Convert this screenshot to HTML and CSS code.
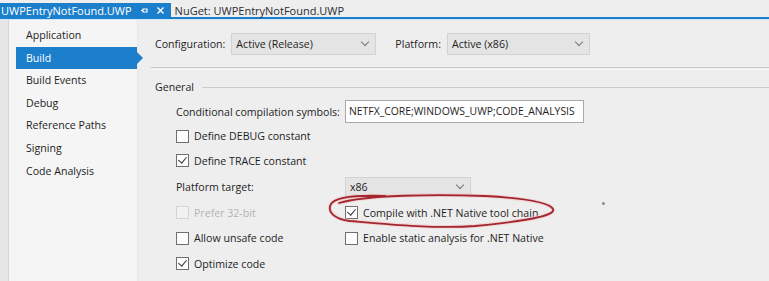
FILE: index.html
```html
<!DOCTYPE html>
<html>
<head>
    <title>UWPEntryNotFound.UWP</title>
    <link rel="stylesheet" href="styles.css">
</head>
<body>
    <div class="tabbar">
        <div class="tab active">
            <span>UWPEntryNotFound.UWP</span>
            <svg class="pin" width="9" height="9" viewBox="0 0 9 9"><path d="M1 4.5h2M3 2.5v4M3 3h4v3H3" fill="none" stroke="#fff" stroke-width="1.2"/></svg>
            <svg class="close" width="9" height="9" viewBox="0 0 9 9"><path d="M1.5 1.5l6 6M7.5 1.5l-6 6" stroke="#fff" stroke-width="1.4"/></svg>
        </div>
        <div class="tab">NuGet: UWPEntryNotFound.UWP</div>
    </div>

    <div class="content">
        <div class="gutter"></div>
        <ul class="sidebar">
            <li>Application</li>
            <li class="selected">Build</li>
            <li>Build Events</li>
            <li>Debug</li>
            <li>Reference Paths</li>
            <li>Signing</li>
            <li>Code Analysis</li>
        </ul>

        <div class="main">
            <div class="config-row">
                <span class="label config-label">Configuration:</span>
                <div class="select config-select">Active (Release)<span class="chevron"></span></div>
                <span class="label platform-label">Platform:</span>
                <div class="select platform-select">Active (x86)<span class="chevron"></span></div>
            </div>
            <div class="divider"></div>

            <div class="group-title"><span>General</span></div>

            <div class="fields">
                <span class="label">Conditional compilation symbols:</span>
                <div class="textbox">NETFX_CORE;WINDOWS_UWP;CODE_ANALYSIS</div>

                <label class="check"><span class="box"></span>Define DEBUG constant</label>
                <span></span>

                <label class="check"><span class="box checked"></span>Define TRACE constant</label>
                <span></span>

                <span class="label">Platform target:</span>
                <div class="select target-select">x86<span class="chevron"></span></div>

                <label class="check disabled"><span class="box"></span>Prefer 32-bit</label>
                <label class="check"><span class="box checked"></span>Compile with .NET Native tool chain</label>

                <label class="check"><span class="box"></span>Allow unsafe code</label>
                <label class="check"><span class="box"></span>Enable static analysis for .NET Native</label>

                <label class="check"><span class="box checked"></span>Optimize code</label>
                <span></span>
            </div>
        </div>
    </div>

    <!-- hand drawn marker round the native tool chain option -->
    <svg class="scribble" width="240" height="42" viewBox="0 0 240 42">
        <path d="M14 12 C40 4 110 3 160 5 C195 7 224 11 228 18 C231 25 200 30 150 35 C110 38 60 33 25 30 C8 28 2 20 6 13 C10 6 30 4 60 5" fill="none" stroke="#f4c6c8" stroke-width="4" stroke-linecap="round" opacity="0.6"/>
        <path d="M14 12 C40 4 110 3 160 5 C195 7 224 11 228 18 C231 25 200 30 150 35 C110 38 60 33 25 30 C8 28 2 20 6 13 C10 6 30 4 60 5" fill="none" stroke="#a3262e" stroke-width="1.8" stroke-linecap="round"/>
    </svg>
    <span class="speck"></span>
</body>
</html>
```

FILE: styles.css
```css
body {
    margin: 0;
    width: 769px;
    height: 281px;
    overflow: hidden;
    background: #eeeeee;
    font-family: "Open Sans", "Noto Sans", Arial, sans-serif;
    font-size: 10.6px;
    color: #1e1e1e;
    position: relative;
}
.tabbar {
    display: flex;
    align-items: flex-end;
    height: 17px;
    border-bottom: 2px solid #1c7fcc;
    box-shadow: 0 1px 0 #cfe7f6;
    font-size: 11px;
}
.tab {
    display: flex;
    align-items: center;
    height: 14px;
    padding: 0 6px 0 4px;
    white-space: nowrap;
    color: #2d2d30;
}
.tab.active {
    background: #1c7fcc;
    color: #fff;
    padding-right: 6px;
    padding-left: 1px;
}
.pin {
    margin-left: 8px;
}
.close {
    margin-left: 7px;
}
.content {
    display: flex;
    height: 262px;
    margin-top: 1px;
}
.gutter {
    width: 8px;
    background: #e6e6e6;
    border-right: 1px solid #d6d6d6;
}
.sidebar {
    list-style: none;
    margin: 0;
    padding: 4px 0 0 7px;
    width: 121px;
    background: #f5f5f5;
    border-right: 1px solid #e9e9e9;
}
.sidebar li {
    position: relative;
    height: 22px;
    line-height: 22px;
    padding-left: 10px;
    margin-bottom: 0.6px;
}
.sidebar li.selected {
    background: #1c7fcc;
    color: #fff;
}
.sidebar li.selected::after {
    content: "";
    position: absolute;
    right: -6px;
    top: 5px;
    border-left: 6px solid #1c7fcc;
    border-top: 6px solid transparent;
    border-bottom: 6px solid transparent;
}
.main {
    flex: 1;
    padding-left: 17px;
}
.config-row {
    display: flex;
    align-items: center;
    height: 22px;
    margin-top: 13px;
}
.label {
    white-space: nowrap;
}
.select {
    position: relative;
    box-sizing: border-box;
    height: 22px;
    line-height: 20px;
    padding-left: 4px;
    background: #e4e4e4;
    border: 1px solid #d2d2d2;
    white-space: nowrap;
}
.chevron {
    position: absolute;
    right: 7px;
    top: 5px;
    width: 5px;
    height: 5px;
    border-right: 1px solid #777;
    border-bottom: 1px solid #777;
    transform: rotate(45deg);
}
.config-select {
    width: 145px;
    margin-left: 6px;
}
.platform-label {
    margin-left: 19px;
}
.platform-select {
    width: 143px;
    margin-left: 6px;
}
.divider {
    height: 1px;
    margin: 12px 0 0 -4px;
    border-top: 1px solid #c9c9c9;
    border-bottom: 1px solid #f7f7f7;
}
.group-title {
    display: flex;
    align-items: center;
    height: 16px;
    margin-top: 9px;
}
.group-title::after {
    content: "";
    flex: 1;
    margin-left: 8px;
    border-top: 1px solid #cbcbcb;
}
.fields {
    display: grid;
    grid-template-columns: 169px 1fr;
    grid-template-rows: 25px 24px 25px 27px 25px 26px 25px;
    align-items: center;
    margin: 4px 0 0 21px;
}
.textbox {
    box-sizing: border-box;
    width: 239px;
    height: 23px;
    line-height: 21px;
    padding-left: 3px;
    background: #fff;
    border: 1px solid #a9a9a9;
    font-size: 10.4px;
    white-space: nowrap;
}
.target-select {
    width: 126px;
    height: 20px;
    line-height: 18px;
}
.target-select .chevron {
    top: 4px;
}
.check {
    display: flex;
    align-items: center;
    white-space: nowrap;
}
.box {
    position: relative;
    box-sizing: border-box;
    width: 13px;
    height: 13px;
    margin-right: 5px;
    background: #fcfcfc;
    border: 1px solid #6f6f6f;
}
.box.checked::after {
    content: "";
    position: absolute;
    left: 3px;
    top: 0px;
    width: 4px;
    height: 7px;
    border-right: 1.5px solid #333;
    border-bottom: 1.5px solid #333;
    transform: rotate(40deg);
}
.check.disabled {
    color: #b4b4b4;
}
.check.disabled .box {
    border-color: #d4d4d4;
    background: #f2f2f2;
}
.scribble {
    position: absolute;
    left: 325px;
    top: 191px;
}
.speck {
    position: absolute;
    left: 602px;
    top: 202px;
    width: 3px;
    height: 3px;
    border-radius: 50%;
    background: #8a8a8a;
}
```
